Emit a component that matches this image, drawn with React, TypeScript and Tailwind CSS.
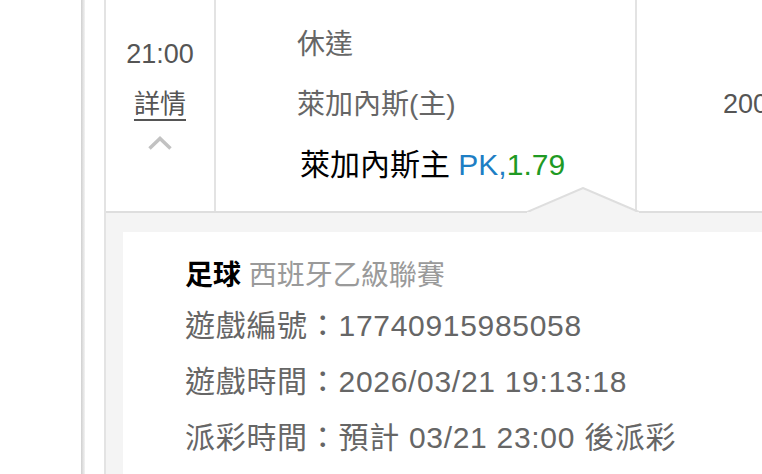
const font = { fontFamily: '"Liberation Sans", "Noto Sans CJK TC", sans-serif' };

export default function App() {
  return (
    <div style={font} className="flex h-[474px] w-[762px] overflow-hidden bg-white">
      <div className="w-[81px] shrink-0" />
      <div className="w-[4px] shrink-0 bg-gradient-to-r from-[#cfcfcf] to-[#f3f3f3]" />
      <div className="w-[19px] shrink-0" />

      <div className="relative flex min-w-0 flex-1 flex-col border-l-2 border-[#e3e3e3]">
        {/* match row */}
        <div className="flex h-[213px] shrink-0 border-b-2 border-[#dedede]">
          <div className="flex w-[110px] shrink-0 flex-col items-center border-r-2 border-[#e3e3e3] pt-[29px]">
            <div className="text-[27px] leading-[50px] text-[#555]">21:00</div>
            <div className="text-[26px] leading-[50px] text-[#555] underline decoration-2 underline-offset-[6px]">
              詳情
            </div>
            <svg className="mt-[6px]" width="26" height="16" viewBox="0 0 26 16">
              <polyline
                points="2.5,13.5 13,3.5 23.5,13.5"
                fill="none"
                stroke="#c2c2c2"
                strokeWidth="3.5"
              />
            </svg>
          </div>

          <div className="flex w-[421px] shrink-0 flex-col border-r-2 border-[#e3e3e3] pl-[81px] pt-[15px]">
            <div className="text-[28px] leading-[60px] text-[#666]">休達</div>
            <div className="text-[28px] leading-[60px] text-[#666]">萊加內斯(主)</div>
            <div className="pl-[3px] text-[30px] leading-[60px] text-black">
              萊加內斯主 <span className="text-[#1d7ec4]">PK,</span>
              <span className="text-[#1f9a24]">1.79</span>
            </div>
          </div>

          <div className="flex-1 overflow-hidden whitespace-nowrap pl-[86px] pt-[84px] text-[27px] leading-[40px] text-[#555]">
            2000
          </div>
        </div>

        {/* notch */}
        <svg
          className="absolute left-[421px] top-[187px]"
          width="114"
          height="27"
          viewBox="0 0 114 27"
        >
          <polygon points="0,26 56,1 112,26" fill="#f4f4f4" />
          <polyline points="0,25 56,1 112,25" fill="none" stroke="#dedede" strokeWidth="2" />
          <rect x="0" y="25" width="112" height="2" fill="#f4f4f4" />
        </svg>

        {/* detail panel */}
        <div className="flex-1 bg-[#f4f4f4] pl-[17px] pt-[19px]">
          <div className="h-full bg-white pl-[62px] pt-[22px] text-[30px] leading-[56px] tracking-[0.7px] text-[#666]">
            <div className="text-[28px] leading-[44px] tracking-normal">
              <span className="font-bold text-black">足球</span>{" "}
              <span className="text-[#9a9a9a]">西班牙乙級聯賽</span>
            </div>
            <div>遊戲編號：17740915985058</div>
            <div>遊戲時間：2026/03/21 19:13:18</div>
            <div>派彩時間：預計 03/21 23:00 後派彩</div>
          </div>
        </div>
      </div>
    </div>
  );
}
